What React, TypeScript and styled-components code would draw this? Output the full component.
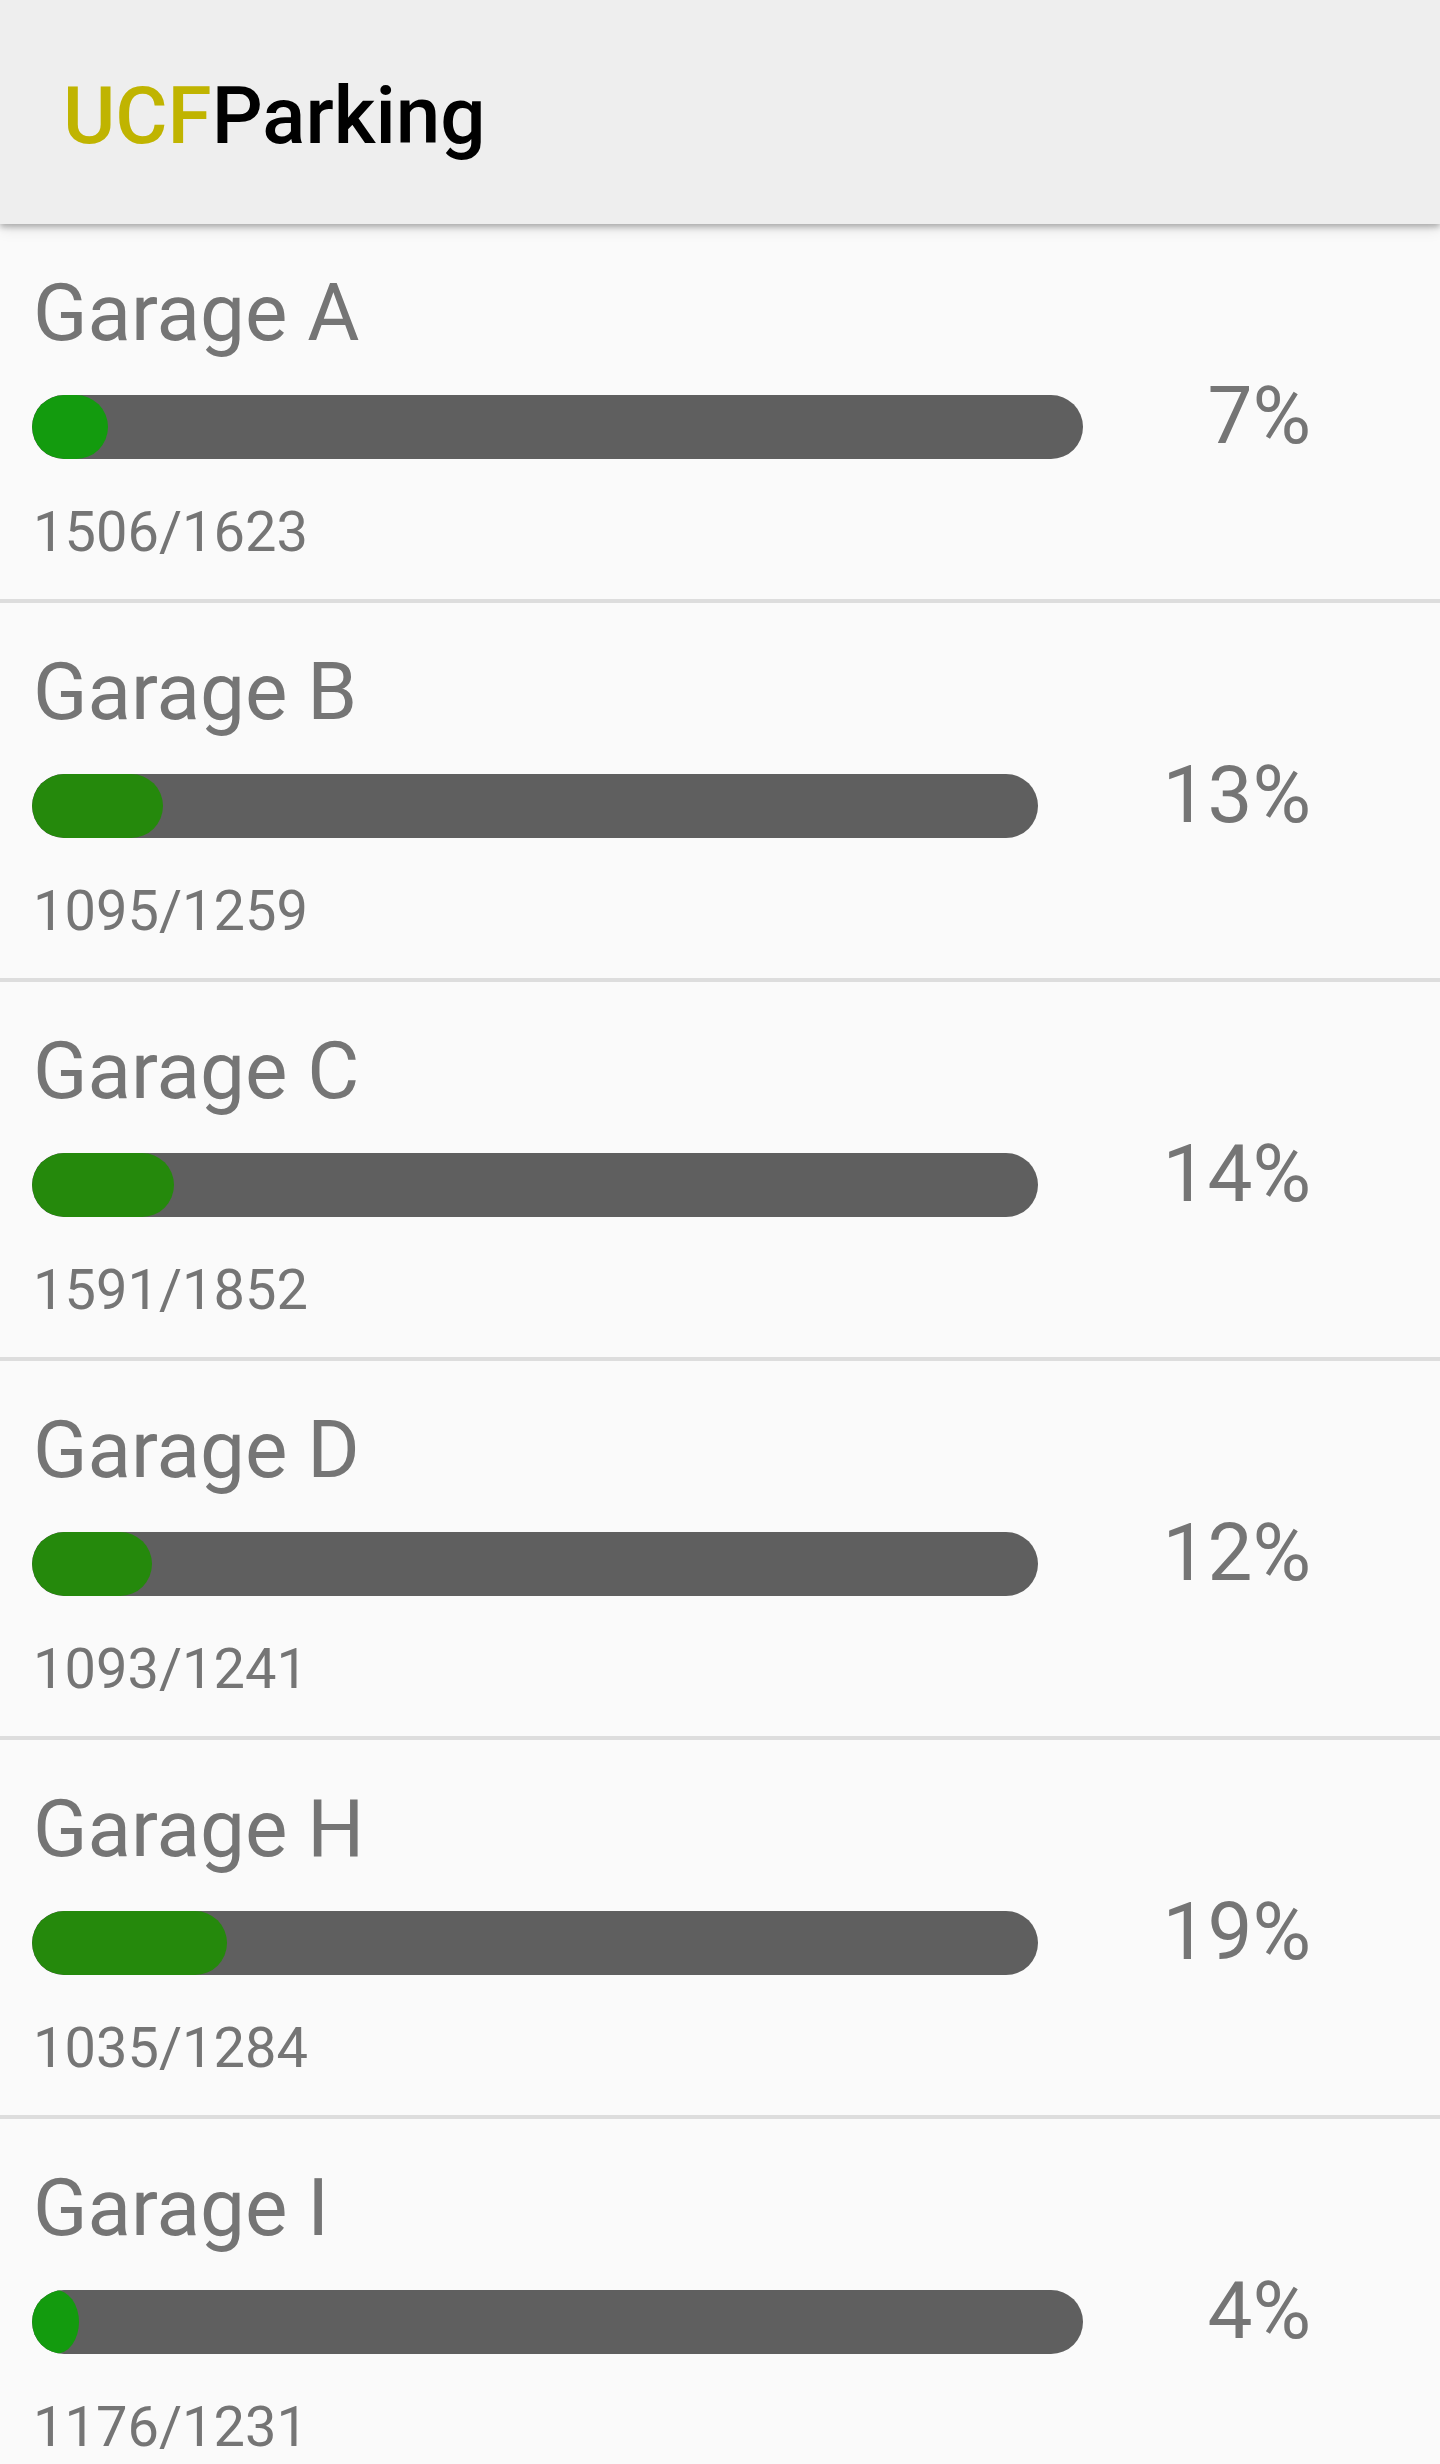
import React from "react";
import styled, { createGlobalStyle } from "styled-components";

const GlobalStyle = createGlobalStyle`
  html, body {
    margin: 0;
    padding: 0;
    background: #fafafa;
    font-family: Roboto, "Noto Sans", "Liberation Sans", sans-serif;
  }
`;

const Page = styled.div`
  width: 1440px;
  min-height: 2464px;
  background: #fafafa;
  display: flex;
  flex-direction: column;
`;

const Header = styled.header`
  position: relative;
  z-index: 2;
  box-sizing: border-box;
  height: 224px;
  padding: 76px 0 0 63px;
  background: #eeeeee;
  box-shadow: 0 3px 6px rgba(0, 0, 0, 0.28), 0 6px 14px rgba(0, 0, 0, 0.08);
`;

const Logo = styled.h1`
  margin: 0;
  font-size: 80px;
  line-height: 80px;
  font-weight: 500;
  color: #000000;
  letter-spacing: 0;
`;

const Gold = styled.span`
  color: #c0b400;
`;

const List = styled.main`
  display: flex;
  flex-direction: column;
`;

const Row = styled.section`
  box-sizing: border-box;
  height: 379px;
  padding: 49px 0 0 33px;
  border-bottom: 4px solid #dddddd;
  display: flex;
  flex-direction: column;
`;

const Title = styled.h2`
  margin: 0;
  font-size: 80px;
  line-height: 80px;
  font-weight: 400;
  color: #757575;
`;

const Middle = styled.div`
  margin-top: 23px;
  display: flex;
  align-items: flex-start;
`;

const Track = styled.div`
  flex: 1;
  height: 64px;
  margin: 19px 124px 0 -1px;
  border-radius: 32px;
  background: #5f5f5f;
  overflow: hidden;
`;

const Fill = styled.div<{ $low: boolean }>`
  height: 100%;
  background: ${(p) => (p.$low ? "#139b0e" : "#25890c")};
  border-radius: min(32px, 50%) / 32px;
`;

const Percent = styled.div`
  font-size: 80px;
  line-height: 80px;
  font-weight: 400;
  color: #757575;
  padding-right: 129px;
`;

const Count = styled.div`
  margin-top: 45px;
  font-size: 56px;
  line-height: 56px;
  font-weight: 400;
  color: #757575;
`;

type Garage = { name: string; avail: number; total: number };

const garages: Garage[] = [
  { name: "Garage A", avail: 1506, total: 1623 },
  { name: "Garage B", avail: 1095, total: 1259 },
  { name: "Garage C", avail: 1591, total: 1852 },
  { name: "Garage D", avail: 1093, total: 1241 },
  { name: "Garage H", avail: 1035, total: 1284 },
  { name: "Garage I", avail: 1176, total: 1231 },
];

export default function App() {
  return (
    <>
      <GlobalStyle />
      <Page>
        <Header>
          <Logo>
            <Gold>UCF</Gold>Parking
          </Logo>
        </Header>
        <List>
          {garages.map((g) => {
            const frac = 1 - g.avail / g.total;
            const pct = Math.round(frac * 100);
            return (
              <Row key={g.name}>
                <Title>{g.name}</Title>
                <Middle>
                  <Track>
                    <Fill $low={pct < 10} style={{ width: `${frac * 100}%` }} />
                  </Track>
                  <Percent>{pct}%</Percent>
                </Middle>
                <Count>
                  {g.avail}/{g.total}
                </Count>
              </Row>
            );
          })}
        </List>
      </Page>
    </>
  );
}
